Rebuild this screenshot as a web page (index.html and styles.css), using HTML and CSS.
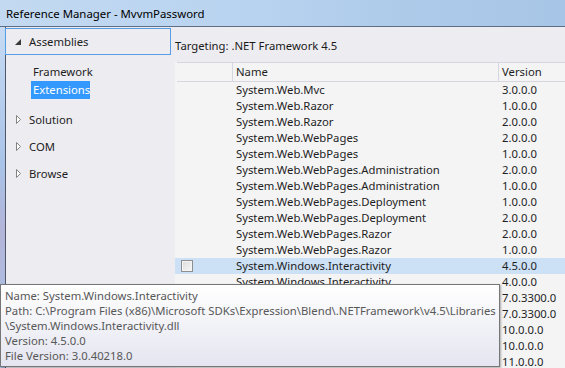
FILE: index.html
```html
<!DOCTYPE html>
<html>
<head>
<meta charset="utf-8">
<title>Reference Manager - MvvmPassword</title>
<link rel="stylesheet" href="styles.css">
</head>
<body>
<div class="window">
  <div class="titlebar"><span class="title">Reference Manager - MvvmPassword</span></div>
  <div class="content">
    <div class="frame-edge"></div>
    <aside class="sidebar">
      <div class="group focused">
        <svg class="tri-open" width="6" height="6" viewBox="0 0 6 6"><path d="M6 0 L6 6 L0 6 Z" fill="#3a3a3a"/></svg>
        <span>Assemblies</span>
      </div>
      <ul class="sub">
        <li>Framework</li>
        <li class="sel">Extensions</li>
      </ul>
      <div class="group first">
        <svg class="tri" width="5" height="9" viewBox="0 0 5 9"><path d="M0.5 0.5 L4.5 4.5 L0.5 8.5 Z" fill="#fff" stroke="#838383" stroke-width="1"/></svg>
        <span>Solution</span>
      </div>
      <div class="group">
        <svg class="tri" width="5" height="9" viewBox="0 0 5 9"><path d="M0.5 0.5 L4.5 4.5 L0.5 8.5 Z" fill="#fff" stroke="#838383" stroke-width="1"/></svg>
        <span>COM</span>
      </div>
      <div class="group">
        <svg class="tri" width="5" height="9" viewBox="0 0 5 9"><path d="M0.5 0.5 L4.5 4.5 L0.5 8.5 Z" fill="#fff" stroke="#838383" stroke-width="1"/></svg>
        <span>Browse</span>
      </div>
    </aside>
    <main class="main">
      <div class="targeting">Targeting: .NET Framework 4.5</div>
      <div class="list">
        <div class="row header">
          <div class="cell check"></div>
          <div class="cell name">Name</div>
          <div class="cell ver">Version</div>
        </div>
        <div class="row"><div class="cell check"></div><div class="cell name">System.Web.Mvc</div><div class="cell ver">3.0.0.0</div></div>
        <div class="row"><div class="cell check"></div><div class="cell name">System.Web.Razor</div><div class="cell ver">1.0.0.0</div></div>
        <div class="row"><div class="cell check"></div><div class="cell name">System.Web.Razor</div><div class="cell ver">2.0.0.0</div></div>
        <div class="row"><div class="cell check"></div><div class="cell name">System.Web.WebPages</div><div class="cell ver">2.0.0.0</div></div>
        <div class="row"><div class="cell check"></div><div class="cell name">System.Web.WebPages</div><div class="cell ver">1.0.0.0</div></div>
        <div class="row"><div class="cell check"></div><div class="cell name">System.Web.WebPages.Administration</div><div class="cell ver">2.0.0.0</div></div>
        <div class="row"><div class="cell check"></div><div class="cell name">System.Web.WebPages.Administration</div><div class="cell ver">1.0.0.0</div></div>
        <div class="row"><div class="cell check"></div><div class="cell name">System.Web.WebPages.Deployment</div><div class="cell ver">1.0.0.0</div></div>
        <div class="row"><div class="cell check"></div><div class="cell name">System.Web.WebPages.Deployment</div><div class="cell ver">2.0.0.0</div></div>
        <div class="row"><div class="cell check"></div><div class="cell name">System.Web.WebPages.Razor</div><div class="cell ver">2.0.0.0</div></div>
        <div class="row"><div class="cell check"></div><div class="cell name">System.Web.WebPages.Razor</div><div class="cell ver">1.0.0.0</div></div>
        <div class="row selected"><div class="cell check"><span class="checkbox"></span></div><div class="cell name">System.Windows.Interactivity</div><div class="cell ver">4.5.0.0</div></div>
        <div class="row"><div class="cell check"></div><div class="cell name">System.Windows.Interactivity</div><div class="cell ver">4.0.0.0</div></div>
        <div class="row"><div class="cell check"></div><div class="cell name"></div><div class="cell ver">7.0.3300.0</div></div>
        <div class="row"><div class="cell check"></div><div class="cell name"></div><div class="cell ver">7.0.3300.0</div></div>
        <div class="row"><div class="cell check"></div><div class="cell name"></div><div class="cell ver">10.0.0.0</div></div>
        <div class="row"><div class="cell check"></div><div class="cell name"></div><div class="cell ver">10.0.0.0</div></div>
        <div class="row"><div class="cell check"></div><div class="cell name"></div><div class="cell ver">11.0.0.0</div></div>
      </div>
    </main>
  </div>
  <div class="tooltip">
    <div>Name: System.Windows.Interactivity</div>
    <div>Path: C:\Program Files (x86)\Microsoft SDKs\Expression\Blend\.NETFramework\v4.5\Libraries</div>
    <div>\System.Windows.Interactivity.dll</div>
    <div>Version: 4.5.0.0</div>
    <div>File Version: 3.0.40218.0</div>
  </div>
</div>
</body>
</html>
```
FILE: styles.css
```css
* {
  box-sizing: border-box;
  margin: 0;
  padding: 0;
}

html, body {
  width: 565px;
  height: 368px;
  overflow: hidden;
}

body {
  font-family: "Noto Sans", "Open Sans", sans-serif;
  font-size: 11.3px;
  color: #1e1e1e;
  background: #edecf1;
}

.window {
  position: relative;
  width: 565px;
  height: 368px;
  display: flex;
  flex-direction: column;
}

.titlebar {
  flex: none;
  height: 27px;
  padding-left: 6px;
  display: flex;
  align-items: center;
  border-bottom: 1px solid #5f6e84;
  background: linear-gradient(to right, #c3d9f1 0%, #b8d3f0 45%, #aecbea 70%, #a7c5e6 100%);
  color: #000;
  font-size: 11.4px;
}

.content {
  flex: 1;
  display: flex;
  min-height: 0;
}

.frame-edge {
  flex: none;
  width: 5px;
  background: linear-gradient(to bottom, #c6dbf3, #a9c3e8 40%, #b3b4d8 60%, #a9c6ec);
}

.sidebar {
  flex: none;
  width: 170px;
  border-left: 1px solid #4f586a;
  background: #edecf1;
  padding-top: 1px;
}

.group {
  height: 27px;
  display: flex;
  align-items: center;
  padding-left: 10px;
}

.group .tri {
  margin-right: 8px;
}

.group.focused {
  margin-left: -1px;
  width: 166px;
  border: 1px solid #569de5;
  padding-left: 9px;
}

.group.focused .tri-open {
  margin-right: 8px;
  margin-top: 1px;
}

.group.first {
  margin-top: 7px;
}

.sub {
  list-style: none;
  margin-top: 8px;
  padding-left: 25px;
  display: flex;
  flex-direction: column;
  align-items: flex-start;
}

.sub li {
  height: 18px;
  line-height: 18px;
  padding: 0 2px;
}

.sub li.sel {
  background: #3399ff;
  color: #fff;
  width: 59px;
}

.main {
  flex: 1;
  display: flex;
  flex-direction: column;
  min-width: 0;
}

.targeting {
  flex: none;
  height: 35px;
  padding-top: 11px;
  line-height: 15px;
  color: #1a1a1a;
}

.list {
  flex: 1;
  background: #f4f4f5;
  overflow: hidden;
}

.row {
  display: grid;
  grid-template-columns: 57px 266px 1fr;
  height: 16px;
  line-height: 16px;
  white-space: nowrap;
}

.row .cell {
  overflow: hidden;
}

.row .name,
.row .ver {
  padding-left: 4px;
}

.row.header {
  height: 20px;
  line-height: 18px;
  border-top: 1px solid #d6d6e0;
  border-bottom: 1px solid #d6d6e0;
  margin-left: 2px;
  grid-template-columns: 55px 266px 1fr;
}

.row.header .name,
.row.header .ver {
  border-left: 1px solid #d6d6e0;
  padding-left: 3px;
}

.row.selected {
  background: #cce0f6;
}

.check {
  display: flex;
  align-items: center;
  padding-left: 6px;
}

.checkbox {
  display: block;
  width: 12px;
  height: 12px;
  border: 1px solid #8e8f8f;
  background: linear-gradient(135deg, #dcdcdc, #f8f8f8);
  box-shadow: inset 0 0 0 1px #f4f4f4;
}

.tooltip {
  position: absolute;
  left: 0;
  top: 284px;
  width: 500px;
  height: 83px;
  border: 1px solid #767676;
  background: linear-gradient(to bottom, #ffffff 0%, #e4e5f0 100%);
  box-shadow: 1px 1px 2px rgba(0, 0, 0, 0.3);
  padding: 3px 0 0 4px;
  line-height: 15px;
  color: #575757;
  white-space: nowrap;
}
```
